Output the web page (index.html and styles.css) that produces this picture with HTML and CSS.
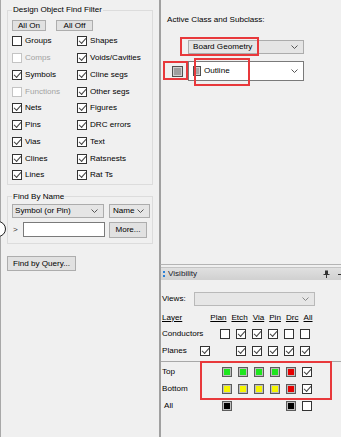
FILE: index.html
```html
<!DOCTYPE html>
<html>
<head>
<meta charset="utf-8">
<title>Find / Visibility</title>
<link rel="stylesheet" href="styles.css">
</head>
<body>
<div class="app">
  <div class="left">
    <fieldset class="grp grp-filter">
      <legend>Design Object Find Filter</legend>
      <div class="btnrow">
        <button class="btn b-allon">All On</button>
        <button class="btn b-alloff">All Off</button>
      </div>
      <div class="checks">
        <label class="ck"><span class="box"></span>Groups</label>
        <label class="ck"><span class="box on"></span>Shapes</label>
        <label class="ck dis"><span class="box"></span>Comps</label>
        <label class="ck"><span class="box on"></span>Voids/Cavities</label>
        <label class="ck"><span class="box on"></span>Symbols</label>
        <label class="ck"><span class="box on"></span>Cline segs</label>
        <label class="ck dis"><span class="box"></span>Functions</label>
        <label class="ck"><span class="box on"></span>Other segs</label>
        <label class="ck"><span class="box on"></span>Nets</label>
        <label class="ck"><span class="box on"></span>Figures</label>
        <label class="ck"><span class="box on"></span>Pins</label>
        <label class="ck"><span class="box on"></span>DRC errors</label>
        <label class="ck"><span class="box on"></span>Vias</label>
        <label class="ck"><span class="box on"></span>Text</label>
        <label class="ck"><span class="box on"></span>Clines</label>
        <label class="ck"><span class="box on"></span>Ratsnests</label>
        <label class="ck"><span class="box on"></span>Lines</label>
        <label class="ck"><span class="box on"></span>Rat Ts</label>
      </div>
    </fieldset>

    <fieldset class="grp grp-name">
      <legend>Find By Name</legend>
      <div class="namerow">
        <div class="combo gray c-sym"><span>Symbol (or Pin)</span><svg class="chev" width="7" height="4" viewBox="0 0 7 4"><polyline points="0.5,0.5 3.5,3.5 6.5,0.5" fill="none" stroke="#555" stroke-width="1"/></svg></div>
        <div class="combo gray c-name"><span>Name</span><svg class="chev" width="7" height="4" viewBox="0 0 7 4"><polyline points="0.5,0.5 3.5,3.5 6.5,0.5" fill="none" stroke="#555" stroke-width="1"/></svg></div>
      </div>
      <div class="namerow row2">
        <span class="gt">&gt;</span>
        <div class="input"></div>
        <button class="btn b-more">More...</button>
      </div>
    </fieldset>

    <button class="btn b-query">Find by Query...</button>
  </div>

  <div class="right">
    <div class="toppane">
      <div class="acl">Active Class and Subclass:</div>
      <div class="combo gray c-class"><span>Board Geometry</span><svg class="chev" width="7" height="4" viewBox="0 0 7 4"><polyline points="0.5,0.5 3.5,3.5 6.5,0.5" fill="none" stroke="#555" stroke-width="1"/></svg></div>
      <div class="subrow">
        <span class="bigsw"></span>
        <div class="combo white c-sub"><span class="minisw"></span><span>Outline</span><svg class="chev" width="7" height="4" viewBox="0 0 7 4"><polyline points="0.5,0.5 3.5,3.5 6.5,0.5" fill="none" stroke="#555" stroke-width="1"/></svg></div>
      </div>
    </div>

    <div class="vis">
      <div class="vhead">
        <span class="grip"></span>
        <span class="vtitle">Visibility</span>
        <svg class="pin" width="7" height="8" viewBox="0 0 7 8"><rect x="2" y="0.5" width="3" height="4" fill="#333"/><rect x="0.5" y="4" width="6" height="1" fill="#333"/><rect x="3" y="5" width="1" height="3" fill="#333"/></svg>
        <span class="vx"></span>
      </div>
      <div class="vbody">
        <div class="views">
          <span class="vlabel">Views:</span>
          <div class="combo vcombo"><svg class="chev" width="7" height="4" viewBox="0 0 7 4"><polyline points="0.5,0.5 3.5,3.5 6.5,0.5" fill="none" stroke="#888" stroke-width="1"/></svg></div>
        </div>
        <div class="hdr">
          <span class="u">Layer</span>
          <span class="u first">Plan</span>
          <span class="u">Etch</span>
          <span class="u">Via</span>
          <span class="u">Pin</span>
          <span class="u">Drc</span>
          <span class="u">All</span>
        </div>
        <div class="vrow">
          <span class="lbl span2">Conductors</span>
          <span class="box"></span><span class="box on"></span><span class="box on"></span><span class="box on"></span><span class="box"></span><span class="box"></span>
        </div>
        <div class="vrow">
          <span class="lbl">Planes</span>
          <span class="box on"></span><span></span><span class="box on"></span><span class="box on"></span><span class="box on"></span><span class="box on"></span><span class="box on"></span>
        </div>
        <div class="sep"></div>
        <div class="vrow">
          <span class="lbl span2">Top</span>
          <span class="sw"><i class="green"></i></span><span class="sw"><i class="green"></i></span><span class="sw"><i class="green"></i></span><span class="sw"><i class="green"></i></span><span class="sw"><i class="red"></i></span><span class="box on sh"></span>
        </div>
        <div class="vrow">
          <span class="lbl span2">Bottom</span>
          <span class="sw"><i class="yellow"></i></span><span class="sw"><i class="yellow"></i></span><span class="sw"><i class="yellow"></i></span><span class="sw"><i class="yellow"></i></span><span class="sw"><i class="red"></i></span><span class="box on sh"></span>
        </div>
        <div class="vrow">
          <span class="lbl span2 alll">All</span>
          <span class="sw"><i class="black"></i></span><span></span><span></span><span></span><span class="sw"><i class="black"></i></span><span class="box sh"></span>
        </div>
      </div>
    </div>
  </div>

  <span class="circle"></span>
  <span class="mark m1"></span>
  <span class="mark m2"></span>
  <span class="mark m3"></span>
  <span class="mark m4"></span>
</div>
</body>
</html>
```

FILE: styles.css
```css
* { box-sizing: border-box; }
html, body { margin: 0; padding: 0; }
body {
  width: 341px;
  height: 437px;
  overflow: hidden;
  background: #f0f0f0;
  font-family: "Liberation Sans", Arial, sans-serif;
  font-size: 8.1px;
  line-height: 10px;
  color: #000;
}
.app { display: flex; height: 437px; position: relative; }

/* ---------- left panel ---------- */
.left {
  width: 160px;
  flex: none;
  border-left: 1px solid #a8a8a8;
  border-right: 1px solid #a0a0a0;
  padding: 5px 0 0 6px;
}
.grp {
  margin: 0;
  min-width: 0;
  width: 146px;
  border: 1px solid #dcdcdc;
  padding: 0 0 0 4px;
}
.grp legend { padding: 0 1px; line-height: 10px; }

.btn {
  font: inherit;
  color: #000;
  background: #e1e1e1;
  border: 1px solid #adadad;
  padding: 0;
  margin: 0;
  display: block;
}
.btnrow { display: flex; gap: 10px; padding-top: 5px; }
.b-allon { width: 34px; height: 11px; line-height: 9px; }
.b-alloff { width: 37px; height: 11px; line-height: 9px; }

.checks {
  display: grid;
  grid-template-columns: 65px 1fr;
  grid-auto-rows: 16.75px;
  align-items: center;
  margin-top: 2px;
}
.ck { display: flex; align-items: center; gap: 3px; white-space: nowrap; }
.ck.dis { color: #a3a3a3; }
.ck.dis .box { border-color: #c4c4c4; }

.box {
  position: relative;
  display: block;
  width: 10px;
  height: 10px;
  border: 1px solid #333;
  background: #fff;
  flex: none;
}
.box.on::after {
  content: "";
  position: absolute;
  left: 1px;
  top: 1px;
  width: 6px;
  height: 3px;
  border-left: 1px solid #444;
  border-bottom: 1px solid #444;
  transform: rotate(-48deg);
}

.grp-name { margin-top: 7px; padding-bottom: 5px; }
.namerow { display: flex; gap: 5px; padding-top: 2px; }
.namerow.row2 { padding-top: 4px; gap: 0; align-items: flex-start; }
.combo {
  position: relative;
  display: flex;
  align-items: center;
  border: 1px solid #acacac;
  white-space: nowrap;
}
.combo.gray { background: #e5e5e5; }
.combo.white { background: #fff; border-color: #7a7a7a; }
.combo .chev { position: absolute; right: 5px; top: 50%; margin-top: -2px; }
.c-sym { width: 92px; height: 14px; padding-left: 2px; }
.c-name { width: 41px; height: 14px; padding-left: 3px; }
.gt { width: 11px; padding-left: 1px; line-height: 15px; color: #333; }
.input { width: 82px; height: 15px; border: 1px solid #7a7a7a; background: #fff; }
.b-more { width: 38px; height: 16px; margin-left: 4px; line-height: 14px; }
.b-query { width: 69px; height: 15px; margin-top: 12px; line-height: 13px; }

/* ---------- right column ---------- */
.right { flex: 1; display: flex; flex-direction: column; }
.toppane {
  height: 265px;
  flex: none;
  border-left: 1px solid #a0a0a0;
  border-bottom: 1px solid #b4b4b4;
  padding: 15px 0 0 6px;
}
.c-class { margin-top: 15px; margin-left: 21px; width: 116px; height: 14px; padding-left: 4px; }
.subrow { display: flex; align-items: center; margin-top: 7px; }
.bigsw {
  width: 11px;
  height: 11px;
  margin-left: 5px;
  margin-right: 5px;
  border: 1px solid #505050;
  background: #9e9e9e;
  box-shadow: inset 0 0 0 1px #cfcfcf;
}
.c-sub { width: 116px; height: 20px; padding-left: 4px; gap: 3px; }
.minisw {
  width: 8px;
  height: 10px;
  border: 1px solid #505050;
  background: #a8a8a8;
  box-shadow: inset 0 0 0 1px #d2d2d2;
}

.vis { flex: 1; border-left: 1px solid #a0a0a0; }
.vhead {
  margin-top: 2px;
  height: 13px;
  display: flex;
  align-items: center;
  background: linear-gradient(#e0e0e0, #d0d0d0);
  border-top: 1px solid #c4c4c4;
  padding-left: 2px;
}
.grip {
  width: 2px;
  height: 6px;
  background: linear-gradient(#2a7fd6 0 2px, transparent 2px 4px, #2a7fd6 4px 6px);
  margin-right: 3px;
}
.vtitle { flex: 1; color: #1b1b2b; }
.pin { margin-right: 8px; }
.vx { width: 3px; height: 1px; background: #333; }

.vbody { padding: 12px 0 0 1px; }
.views { display: flex; align-items: center; height: 14px; }
.vlabel { width: 32px; }
.vcombo { width: 121px; height: 14px; background: #e6e6e6; border-color: #b9b9b9; }
.hdr { display: flex; gap: 5px; margin-top: 4px; height: 15px; align-items: center; }
.u { text-decoration: underline; }
.hdr .first { margin-left: 23px; }

.vrow {
  display: grid;
  grid-template-columns: 38px 20px repeat(6, 16px);
  height: 17px;
  align-items: center;
}
.lbl { white-space: nowrap; }
.span2 { grid-column: span 2; }
.alll { padding-left: 2px; }
.sep { height: 1px; background: #a8a8a8; margin: 2px 0 1px -1px; }
.sw {
  display: block;
  width: 10px;
  height: 10px;
  margin-left: 2px;
  border: 1px solid #5c5c5c;
  background: #bdbdbd;
  padding: 1px;
}
.sw i { display: block; width: 6px; height: 6px; }
.sw .green { background: #1ee61e; }
.sw .yellow { background: #f5f500; }
.sw .red { background: #e60000; }
.sw .black { background: #000; }
.box.sh { margin-left: 2px; }

/* ---------- overlays ---------- */
.circle {
  position: absolute;
  left: -10px;
  top: 221px;
  width: 16px;
  height: 16px;
  border-radius: 50%;
  border: 1px solid #222;
  background: #fff;
}
.mark { position: absolute; border: 2px solid #e8383b; }
.m1 { left: 180px; top: 37px; width: 79px; height: 19px; }
.m2 { left: 163px; top: 61px; width: 25px; height: 19px; }
.m3 { left: 194px; top: 58px; width: 56px; height: 28px; }
.m4 { left: 200px; top: 361px; width: 132px; height: 39px; }
```
